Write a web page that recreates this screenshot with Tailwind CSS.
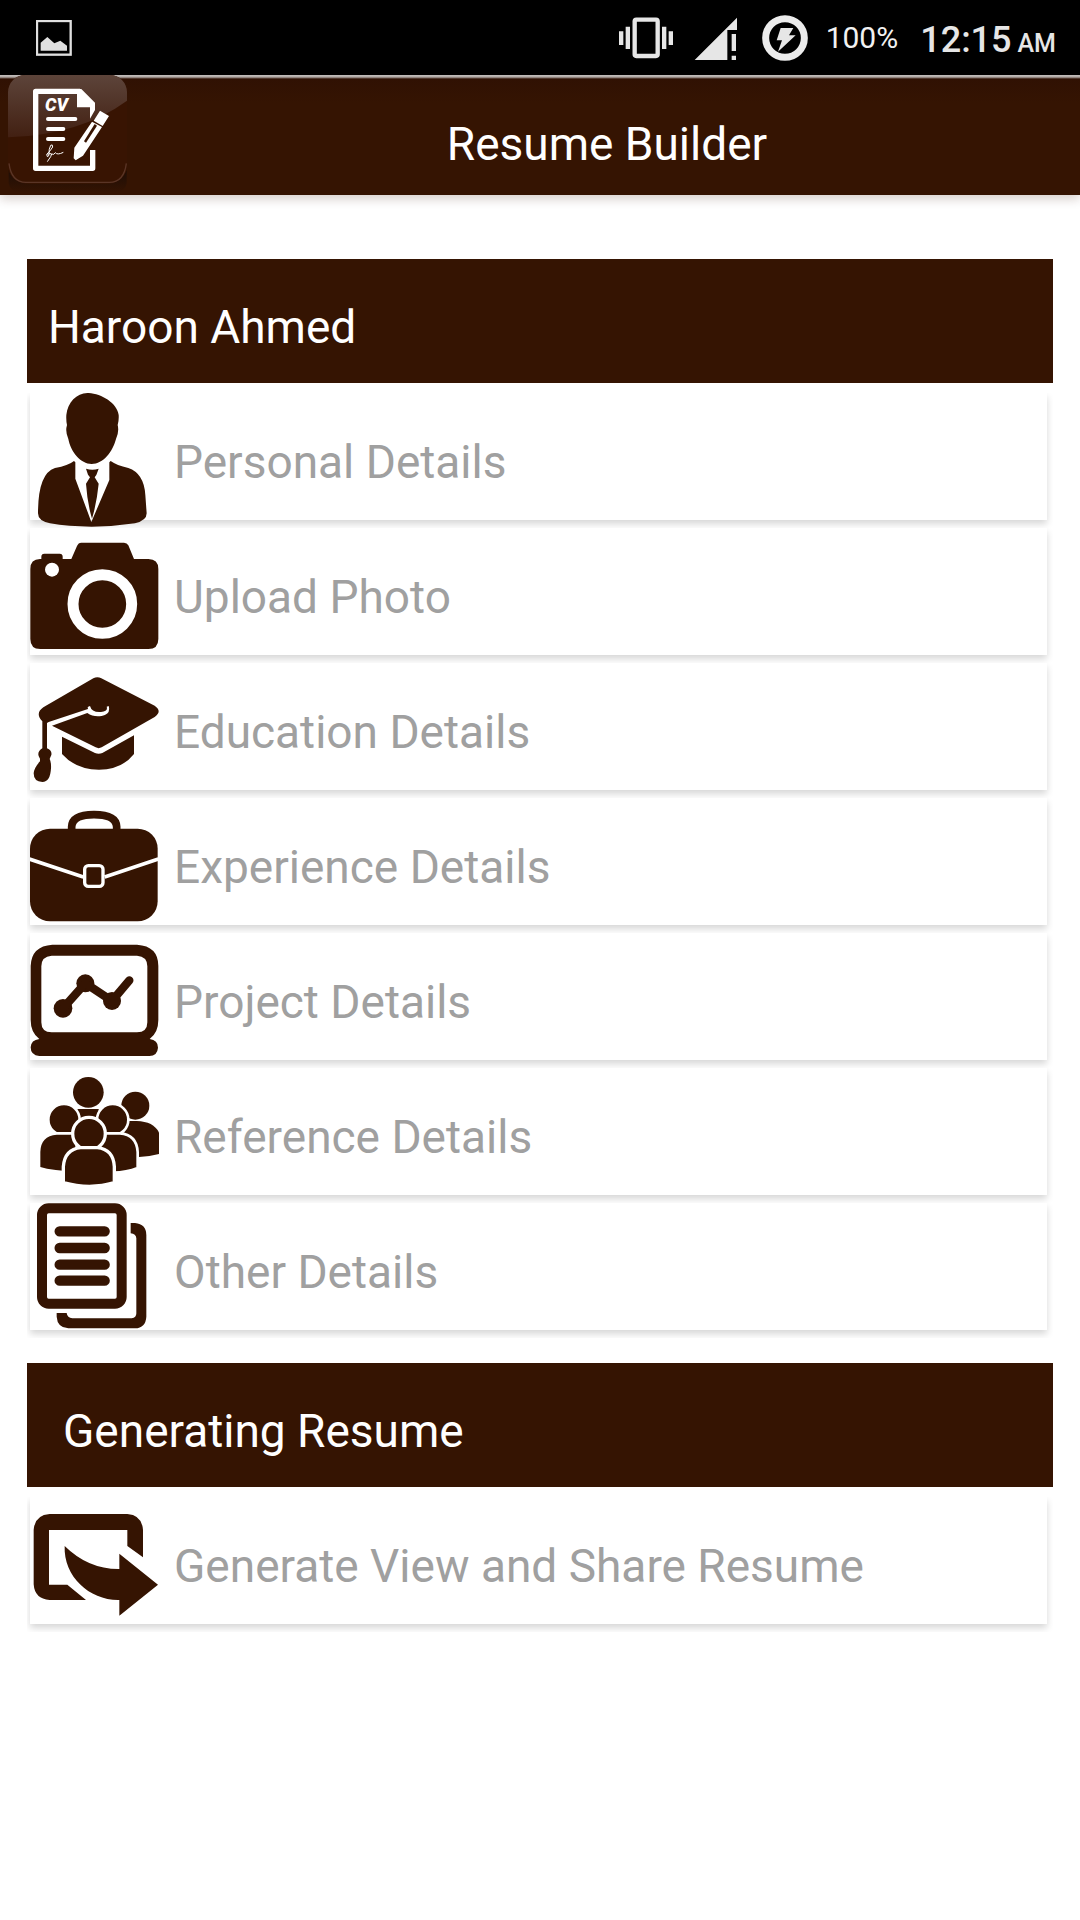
<!DOCTYPE html>
<html lang="en">
<head>
<meta charset="utf-8">
<meta name="viewport" content="width=device-width, initial-scale=1">
<title>Resume Builder</title>
<script src="https://cdn.jsdelivr.net/npm/@tailwindcss/browser@4"></script>
</head>
<body class="min-h-screen bg-white font-[Roboto,sans-serif] text-[46px] leading-[54px] text-[#a0a0a0]">

<!-- Status bar -->
<div class="flex h-[75px] items-center bg-black pl-9 pr-6 text-[#e6e6e6]">
  <svg class="h-9 w-9" viewBox="108 60 108 108" fill="none" aria-label="Image notification">
    <rect x="111" y="63" width="101" height="101" stroke="#e0e0e0" stroke-width="7"/>
    <path d="M122 152V128L142 111L163 130L181 122L201 137V152Z" fill="#e0e0e0"/>
  </svg>
  <svg class="ml-auto h-[50px] w-[190px]" viewBox="117 36 570 150" fill="#e6e6e6" aria-label="Vibrate, signal, charging">
    <path d="M117 91h13v41h-13zM137 77h13v67h-13zM246 77h13v67h-13zM266 91h13v41h-13z"/>
    <rect x="164" y="56" width="69" height="109" rx="5" fill="none" stroke="#e6e6e6" stroke-width="13"/>
    <path d="M344 177L471 50V87H442V177ZM455 99h13v51h-13zM455 164h13v13h-13z"/>
    <circle cx="615" cy="111" r="58" fill="none" stroke="#ececec" stroke-width="21"/>
    <path d="M602 81H640L627 103H647L594 152L606 118H590Z"/>
  </svg>
  <span class="ml-[17px] text-[30px] leading-9 text-[#f2f2f2]">100%</span>
  <span class="ml-[22px] mt-2 flex items-baseline gap-[6px] text-[36px] font-medium leading-9">12:15 <span class="text-[25px]">AM</span></span>
</div>

<!-- App bar -->
<header class="flex h-[120px] bg-[linear-gradient(#c4c0be_0,#b0a8a4_2px,#301103_4px,#351402_28px)] pl-2 text-white shadow-[0_4px_10px_rgba(60,20,0,0.2)]">
  <svg class="h-[120px] w-[120px] shrink-0" viewBox="24 225 360 360" aria-label="Resume Builder logo">
    <defs>
      <linearGradient id="gloss" x1="0" y1="0" x2="0" y2="1">
        <stop offset="0" stop-color="#5d443a"/><stop offset="1" stop-color="#422012"/>
      </linearGradient>
      <linearGradient id="base" x1="0" y1="0" x2="0" y2="1">
        <stop offset="0" stop-color="#1d0d06"/><stop offset="1" stop-color="#351402"/>
      </linearGradient>
      <clipPath id="tile"><rect x="24" y="225" width="357" height="324" rx="52"/></clipPath>
    </defs>
    <path d="M26 510Q50 552 90 552H316Q360 552 380 510V550Q376 578 340 578H66Q30 578 26 550Z" fill="url(#base)"/>
    <rect x="24" y="225" width="357" height="324" rx="52" fill="#381402"/>
    <g clip-path="url(#tile)">
      <path d="M24 225H381V302Q240 405 24 412Z" fill="url(#gloss)"/>
    </g>
    <path d="M27 490Q34 547 78 547H328Q372 547 379 490" fill="none" stroke="#5a3526" stroke-width="4"/>
    <path d="M240 274H107V505H278V450" fill="none" stroke="#fff" stroke-width="16" stroke-linejoin="round"/>
    <path d="M231 267H244L285 308V330L270 356V322H231Z" fill="#fff"/>
    <text x="135" y="334" font-size="54" font-weight="900" font-style="italic" fill="#fff">CV</text>
    <path d="M144 357H226M144 387H190M144 417H190" stroke="#fff" stroke-width="12" stroke-linecap="round"/>
    <path d="M139 464Q152 452 158 441Q158 431 152 436Q146 446 147 465Q144 474 140 467Q148 456 155 462L152 470L142 485M155 462Q162 466 166 458Q172 466 190 457" fill="none" stroke="#fff" stroke-width="3"/>
    <path d="M300 332L327 348L308 378L281 362ZM276 365L306 381L249 467L227 481L221 475L223 443Z" fill="#fff"/>
    <path d="M284 372L291 377L258 428L252 424Z" fill="#381402"/>
  </svg>
  <h1 class="flex flex-1 items-center justify-center pl-[6px] pt-[18px]">Resume Builder</h1>
</header>

<main class="px-[27px] pt-16">
  <section>
    <h2 class="flex h-[124px] items-center bg-[#351402] pl-[21px] pt-3 text-white">Haroon Ahmed</h2>
    <ul class="mt-[10px]">
      <li class="h-[135px] overflow-hidden px-[3px]">
        <a href="#personal" class="flex h-[127px] gap-[15px] shadow-[0_4px_7px_rgba(0,0,0,0.16)] mr-[3px]">
          <svg class="h-[135px] w-[129px] shrink-0" viewBox="90 459 387 405" fill="#351402" aria-hidden="true">
            <path d="M266 459C305 461 352 490 356 525Q357 542 353 555Q358 575 348 597C338 635 310 672 275 672C242 672 212 635 205 597Q195 575 201 555Q198 542 199 525C203 485 232 458 266 459Z"/>
            <path d="M222 663L226 667V716L274 846L328 720V667L332 663Q350 676 385 684Q432 700 436 765L440 820Q440 842 405 850Q340 860 275 860Q205 860 150 850Q114 843 114 820Q114 700 165 684Q205 677 222 663Z"/>
            <path d="M258 686Q277 692 296 686L289 705L284 712L296 731Q290 790 276 836Q262 790 258 731L270 712L264 704Z"/>
          </svg>
          <span class="self-center pt-[10px]">Personal Details</span>
        </a>
      </li>
      <li class="h-[135px] overflow-hidden px-[3px]">
        <a href="#photo" class="flex h-[127px] gap-[15px] shadow-[0_4px_7px_rgba(0,0,0,0.16)] mr-[3px]">
          <svg class="h-[135px] w-[129px] shrink-0" viewBox="90 -6 387 405" fill="#351402" aria-hidden="true">
            <path d="M120 87H124V80Q124 71 133 71H179Q188 71 188 80V87H214L231 48Q235 38 244 38H372Q381 38 385 46L402 87H445Q475 87 475 117V327Q475 357 445 357H121Q91 357 91 327V117Q91 87 120 87Z"/>
            <circle cx="156" cy="119" r="21" fill="#fff"/>
            <circle cx="307" cy="222" r="88" stroke="#fff" stroke-width="33"/>
          </svg>
          <span class="self-center pt-[10px]">Upload Photo</span>
        </a>
      </li>
      <li class="h-[135px] overflow-hidden px-[3px]">
        <a href="#education" class="flex h-[127px] gap-[15px] shadow-[0_4px_7px_rgba(0,0,0,0.16)] mr-[3px]">
          <svg class="h-[135px] w-[129px] shrink-0" viewBox="90 399 387 405" fill="#351402" aria-hidden="true">
            <path d="M130 532L280 445Q292 438 304 445L464 527Q488 544 464 561L305 652Q296 657 287 652L156 587L262 549Q280 562 305 558Q333 553 326 528L320 530Q325 543 303 546Q275 548 270 528L263 531L264 537L146 576L141 579V655Q157 662 154 675Q150 684 149 687Q154 697 153 715Q151 756 127 756Q101 755 101 730Q102 714 120 694V686Q107 668 127 655V574Q104 550 130 532Z"/>
            <path d="M186 620L285 669Q296 674 307 669L402 616V672Q365 719 297 719Q228 719 186 672Z"/>
          </svg>
          <span class="self-center pt-[10px]">Education Details</span>
        </a>
      </li>
      <li class="h-[135px] overflow-hidden px-[3px]">
        <a href="#experience" class="flex h-[127px] gap-[15px] shadow-[0_4px_7px_rgba(0,0,0,0.16)] mr-[3px]">
          <svg class="h-[135px] w-[129px] shrink-0" viewBox="90 24 387 405" fill="#351402" aria-hidden="true">
            <rect x="90" y="116" width="383" height="278" rx="60"/>
            <path d="M215 120V110Q217 74 282 74Q348 74 350 110V120" fill="none" stroke="#351402" stroke-width="23"/>
            <path d="M88 207L250 261M314 261L475 207" stroke="#fff" stroke-width="11"/>
            <rect x="254" y="227" width="55" height="62" rx="11" stroke="#fff" stroke-width="10"/>
          </svg>
          <span class="self-center pt-[10px]">Experience Details</span>
        </a>
      </li>
      <li class="h-[135px] overflow-hidden px-[3px]">
        <a href="#project" class="flex h-[127px] gap-[15px] shadow-[0_4px_7px_rgba(0,0,0,0.16)] mr-[3px]">
          <svg class="h-[135px] w-[129px] shrink-0" viewBox="90 429 387 405" fill="#351402" aria-hidden="true">
            <path fill-rule="evenodd" d="M157 464H411Q475 468 475 528V690Q475 728 449 747Q474 750 474 773Q472 798 448 798H118Q92 796 92 772Q93 750 118 747Q92 728 92 690V528Q94 468 157 464ZM155 497Q124 499 124 529V697Q124 727 155 727H411Q442 727 442 697V529Q442 499 411 497Z"/>
            <circle cx="189" cy="655" r="28"/><circle cx="256" cy="580" r="27"/><circle cx="336" cy="633" r="27"/>
            <path d="M189 655L256 580L336 633L388 571" fill="none" stroke="#351402" stroke-width="25" stroke-linecap="round"/>
          </svg>
          <span class="self-center pt-[10px]">Project Details</span>
        </a>
      </li>
      <li class="h-[135px] overflow-hidden px-[3px]">
        <a href="#reference" class="flex h-[127px] gap-[15px] shadow-[0_4px_7px_rgba(0,0,0,0.16)] mr-[3px]">
          <svg class="h-[135px] w-[129px] shrink-0" viewBox="90 24 387 405" fill="#351402" aria-hidden="true">
            <circle cx="265" cy="97" r="46"/>
            <path d="M232 147H296V190H232Z"/>
            <circle cx="406" cy="137" r="42"/>
            <path d="M370 183H410Q477 185 484 242V280Q450 290 417 291L370 230Z"/>
            <g stroke="#fff" stroke-width="8">
              <circle cx="192" cy="179" r="47"/>
              <path d="M117 324V276Q118 224 170 220H230V338Q160 337 117 324Z"/>
              <circle cx="338" cy="179" r="47"/>
              <path d="M300 220H360Q410 224 413 276V324Q380 337 340 338L290 300Z"/>
              <circle cx="267" cy="221" r="49" stroke-width="10"/>
              <path d="M190 368V320Q194 268 242 263H292Q340 268 343 320V368Q270 390 190 368Z" stroke-width="10"/>
            </g>
          </svg>
          <span class="self-center pt-[10px]">Reference Details</span>
        </a>
      </li>
      <li class="h-[135px] overflow-hidden px-[3px]">
        <a href="#other" class="flex h-[127px] gap-[15px] shadow-[0_4px_7px_rgba(0,0,0,0.16)] mr-[3px]">
          <svg class="h-[135px] w-[129px] shrink-0" viewBox="90 429 387 405" fill="#351402" aria-hidden="true">
            <rect x="126" y="445" width="239" height="286" rx="20" fill="none" stroke="#351402" stroke-width="30"/>
            <path d="M179 514H314M179 564H314M179 614H314M179 662H314" stroke="#351402" stroke-width="31" stroke-linecap="round"/>
            <path d="M392 489H405Q439 492 439 525V770Q437 804 405 805H205Q172 803 170 770V759H200Q202 774 217 775H395Q409 774 409 760V535Q408 521 392 520Z"/>
          </svg>
          <span class="self-center pt-[10px]">Other Details</span>
        </a>
      </li>
    </ul>
  </section>

  <section class="mt-[25px]">
    <h2 class="flex h-[124px] items-center bg-[#351402] pl-9 pt-3 text-white">Generating Resume</h2>
    <ul class="mt-[10px]">
      <li class="h-[135px] overflow-hidden px-[3px]">
        <a href="#generate" class="flex h-[127px] gap-[15px] shadow-[0_4px_7px_rgba(0,0,0,0.16)] mr-[3px]">
          <svg class="h-[135px] w-[129px] shrink-0" viewBox="90 441 387 405" fill="#351402" aria-hidden="true">
            <path d="M149 492H382Q426 495 429 540V622L382 588V540H147V704H202L258 750H149Q104 747 101 703V540Q104 495 149 492Z"/>
            <path d="M194 588Q265 658 358 657V611L474 704L358 797V750C270 752 190 680 194 588Z"/>
          </svg>
          <span class="self-center pt-[10px]">Generate View and Share Resume</span>
        </a>
      </li>
    </ul>
  </section>
</main>
</body>
</html>
